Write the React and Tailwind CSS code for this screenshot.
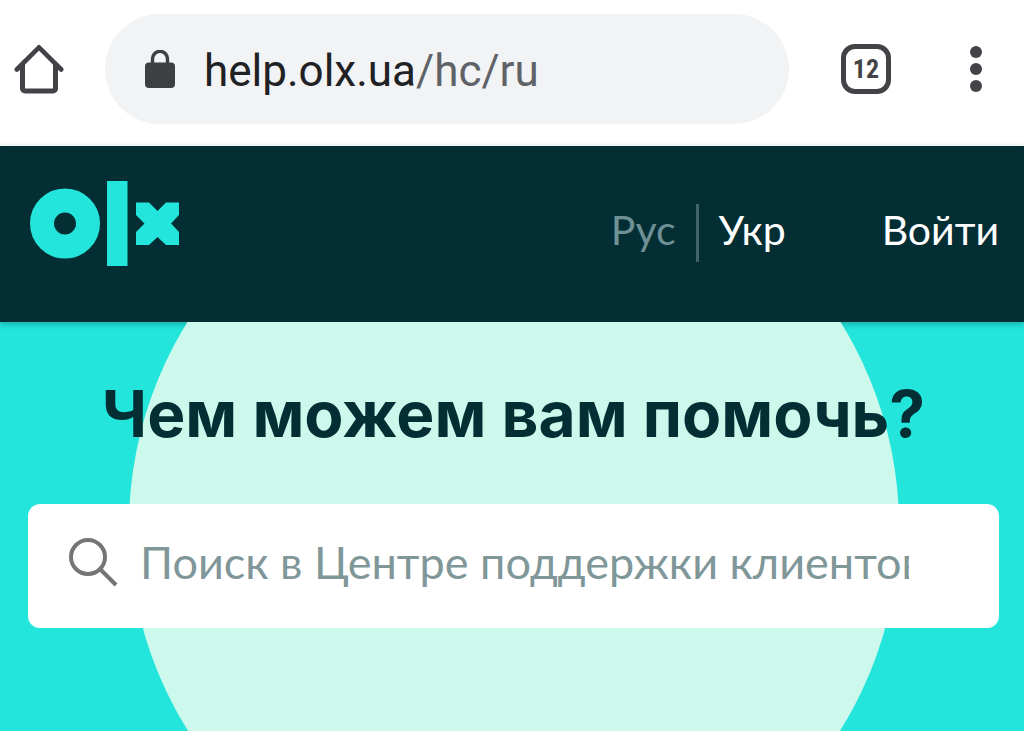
import React from "react";

function HomeIcon() {
  return (
    <svg viewBox="0 0 50 50" className="size-[50px]" fill="none" stroke="#424346" strokeWidth="5" strokeLinecap="round" strokeLinejoin="round" aria-hidden="true">
      <path d="M2.800 25.500 25 3.300 47.200 25.500" strokeWidth="4.600" />
      <path d="M8.500 21V44.500a2.500 2.500 0 0 0 2.500 2.500H39a2.500 2.500 0 0 0 2.500-2.500V21" />
    </svg>
  );
}

function LockIcon() {
  return (
    <svg viewBox="0 0 30 38" className="h-[38px] w-[30px] shrink-0" aria-hidden="true">
      <path d="M7.500 16V8.800a7.500 7.500 0 0 1 15 0V16" fill="none" stroke="#3c4043" strokeWidth="3.400" />
      <rect y="12.500" width="30" height="25.500" rx="4" fill="#3c4043" />
    </svg>
  );
}

function BrowserBar() {
  return (
    <div className="flex items-center bg-white pt-3.5 pr-[42px] pb-[22px] pl-3.5">
      <button type="button" aria-label="Home" className="shrink-0">
        <HomeIcon />
      </button>
      <div className="ml-[41px] flex h-[110px] min-w-0 flex-1 items-center rounded-full bg-[#f2f3f4] pl-10 font-[Roboto,sans-serif] text-[44px] leading-[52px]">
        <LockIcon />
        <p className="ml-[29px] pt-1 whitespace-nowrap text-[#202124]">
          help.olx.ua<span className="text-[#5f6368]">/hc/ru</span>
        </p>
      </div>
      <button type="button" aria-label="Tabs" className="ml-[52px] flex size-[50px] shrink-0 items-center justify-center rounded-[14px] border-[5px] border-[#424346] font-['Roboto_Condensed',Roboto,sans-serif] text-[26px] leading-8 font-bold text-[#424346]">
        12
      </button>
      <button type="button" aria-label="Menu" className="ml-[79px] flex w-3 shrink-0 flex-col items-center gap-[5px]">
        <span className="size-3 shrink-0 rounded-full bg-[#424346]" />
        <span className="size-3 shrink-0 rounded-full bg-[#424346]" />
        <span className="size-3 shrink-0 rounded-full bg-[#424346]" />
      </button>
    </div>
  );
}

function Logo() {
  return (
    <svg viewBox="0 0 150 86" className="h-[86px] w-[150px]" fill="#23e5db" aria-hidden="true">
      <circle cx="35" cy="43.500" r="23" fill="none" stroke="#23e5db" strokeWidth="24" />
      <rect x="77" y="1" width="20.500" height="85" />
      <path d="M106 22.500H119L127.500 31 136 22.500H149V35L141 43.500 149 52V65H136L127.500 57 119 65H106V52L114.500 43.500 106 35Z" />
    </svg>
  );
}

function Header() {
  return (
    <header className="relative flex items-start justify-between bg-[#022e34] pt-[34px] pr-[25px] pb-14 pl-[30px] shadow-[0_2px_6px_rgba(0,47,52,0.3)]">
      <a href="#home" aria-label="OLX">
        <Logo />
      </a>
      <nav className="mt-6 flex h-[58px] items-center text-[41px] leading-[52px] text-white">
        <a href="#ru" className="pb-1.5 text-[#6f9094]">Рус</a>
        <span className="mx-5 h-full w-[3px] bg-[#41656a]" />
        <a href="#uk" className="pb-1.5">Укр</a>
        <a href="#login" className="ml-24 pb-1.5">Войти</a>
      </nav>
    </header>
  );
}

function SearchIcon() {
  return (
    <svg viewBox="0 0 50 50" className="size-[50px] shrink-0" fill="none" stroke="#757575" strokeWidth="4" aria-hidden="true">
      <circle cx="20" cy="20" r="17" />
      <path d="M32 32 48 48" />
    </svg>
  );
}

export default function App() {
  return (
    <div className="flex min-h-screen flex-col bg-[#23e5db] font-[Lato,sans-serif]">
      <BrowserBar />
      <Header />
      <main className="flex-1 overflow-hidden pt-[54px] pr-[25px] pl-7">
        <div className="relative isolate">
          <div className="absolute top-[-235px] left-1/2 -z-10 size-[770px] -translate-x-1/2 rounded-full bg-[#cdf8ec]" />
          <h1 className="text-center font-[Inter,sans-serif] text-[64px] leading-[76px] font-bold whitespace-nowrap text-[#022e34]">
            Чем можем вам помочь?
          </h1>
          <form role="search" className="mt-[52px] flex h-[124px] items-center rounded-xl bg-white pr-[90px] pb-2 pl-10">
            <SearchIcon />
            <input
              type="text"
              aria-label="Поиск"
              placeholder="Поиск в Центре поддержки клиентов"
              className="ml-[22px] min-w-0 flex-1 bg-transparent text-[45px] leading-[56px] text-[#022e34] outline-none placeholder:text-[#7f9799]"
            />
          </form>
        </div>
      </main>
    </div>
  );
}
